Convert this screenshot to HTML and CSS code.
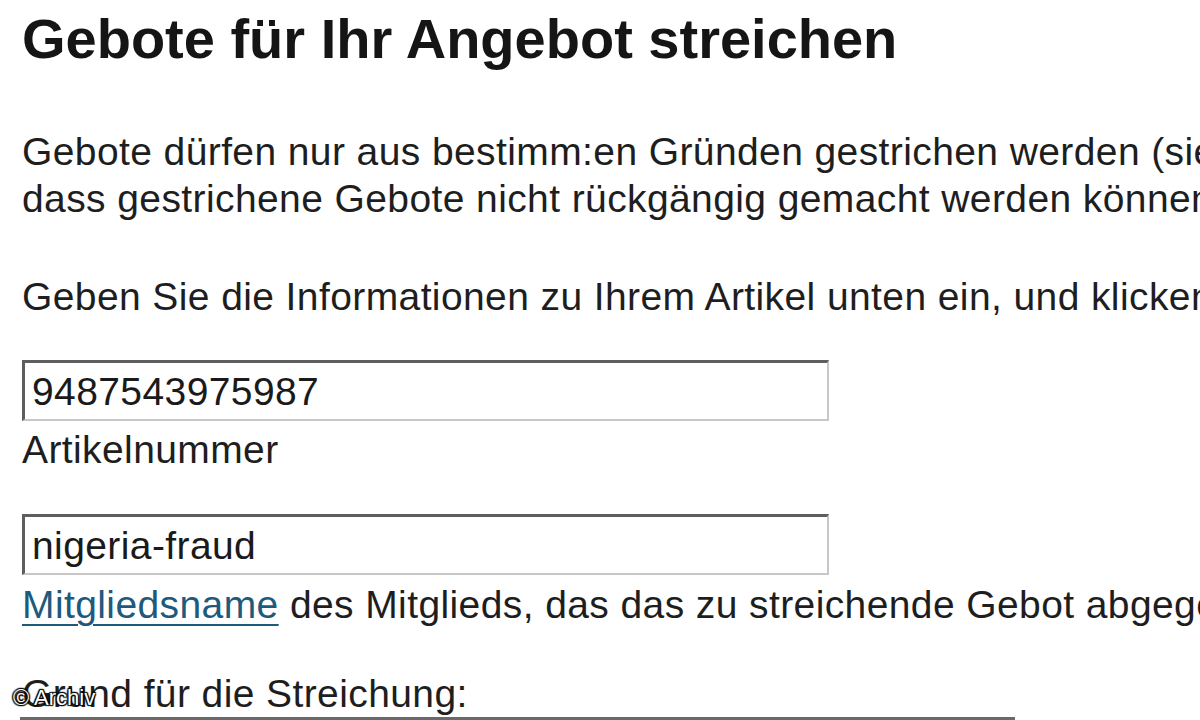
FILE: index.html
```html
<!DOCTYPE html>
<html lang="de">
<head>
<meta charset="utf-8">
<title>Gebote für Ihr Angebot streichen</title>
<link rel="stylesheet" href="styles.css">
</head>
<body>
<main class="page">
  <h1 class="title">Gebote für Ihr Angebot streichen</h1>
  <p class="para first">Gebote dürfen nur aus bestimm:en Gründen gestrichen werden (siehe unten). Bitte beachten Sie,<br>dass gestrichene Gebote nicht rückgängig gemacht werden können.</p>
  <p class="para second">Geben Sie die Informationen zu Ihrem Artikel unten ein, und klicken Sie auf „Gebot streichen“.</p>

  <div class="field field-item">
    <div class="input">9487543975987</div>
    <div class="label">Artikelnummer</div>
  </div>

  <div class="field field-user">
    <div class="input">nigeria-fraud</div>
    <div class="label"><a class="link" href="#">Mitgliedsname</a> des Mitglieds, das das zu streichende Gebot abgegeben hat</div>
  </div>

  <div class="field field-reason">
    <div class="label">Grund für die Streichung:</div>
    <div class="select"></div>
  </div>
</main>
<div class="watermark">© Archiv</div>
</body>
</html>
```

FILE: styles.css
```css
html, body {
  margin: 0;
  padding: 0;
  background: #ffffff;
  width: 1200px;
  height: 720px;
  overflow: hidden;
}

body {
  font-family: "Liberation Sans", Arial, sans-serif;
  color: #1e1e1e;
  position: relative;
}

.page {
  padding: 0 0 0 22px;
  white-space: nowrap;
  overflow: hidden;
  height: 720px;
  box-sizing: border-box;
}

.title {
  margin: 0;
  padding-top: 8px;
  font-size: 56px;
  line-height: 62px;
  font-weight: bold;
  color: #151515;
}

.para {
  margin: 0;
  font-size: 39px;
  line-height: 47px;
  letter-spacing: 0.4px;
}

.para.first {
  margin-top: 58px;
}

.para.second {
  margin-top: 51px;
}

.field {
  font-size: 39px;
  line-height: 47px;
  letter-spacing: 0.4px;
}

.field-item {
  margin-top: 40px;
}

.field-user {
  margin-top: 41px;
}

.field-reason {
  margin-top: 42px;
}

.input {
  box-sizing: border-box;
  width: 807px;
  height: 61px;
  border-style: solid;
  border-width: 3px 2px 2px 3px;
  border-color: #5e5e5e #c8c8c8 #c8c8c8 #5e5e5e;
  padding: 5px 0 4px 7px;
  background: #ffffff;
  color: #1a1a1a;
}

.field-item .label {
  margin-top: 5px;
}

.field-user .label {
  margin-top: 6px;
}

.link {
  color: #1d5a7c;
  text-decoration: underline;
  text-decoration-thickness: 2px;
  text-underline-offset: 6px;
}

.select {
  margin-left: -2px;
  width: 995px;
  height: 4px;
  border-top: 3px solid #6a6a6a;
  box-sizing: border-box;
}

.watermark {
  position: absolute;
  left: 13px;
  top: 685px;
  font-family: "Liberation Sans", Arial, sans-serif;
  font-size: 22px;
  line-height: 26px;
  color: #ffffff;
  text-shadow: 1px 1px 1px #000, -1px -1px 1px #000, 1px -1px 1px #000, -1px 1px 1px #000, 0 0 2px #000;
}
```
